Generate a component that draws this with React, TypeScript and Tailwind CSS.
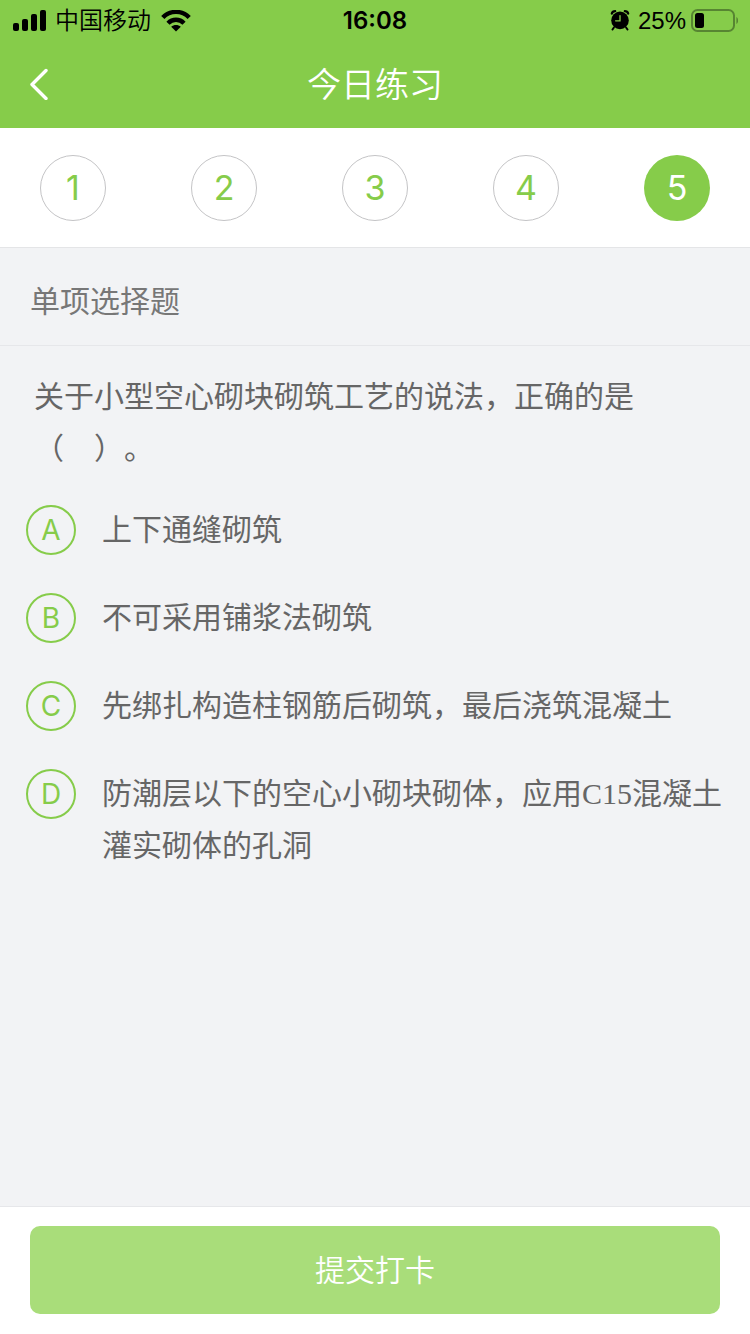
import { useState } from 'react'
import clsx from 'clsx'

const STEPS = [1, 2, 3, 4, 5]

const OPTIONS = [
  { key: 'A', text: '上下通缝砌筑' },
  { key: 'B', text: '不可采用铺浆法砌筑' },
  { key: 'C', text: '先绑扎构造柱钢筋后砌筑，最后浇筑混凝土' },
  { key: 'D', text: '防潮层以下的空心小砌块砌体，应用C15混凝土灌实砌体的孔洞' },
]

function SignalIcon() {
  return (
    <svg width="34" height="22" viewBox="0 0 34 22" aria-hidden="true">
      <rect x="1" y="13" width="6" height="8" rx="2" />
      <rect x="10" y="9" width="6" height="12" rx="2" />
      <rect x="19" y="4" width="6" height="17" rx="2" />
      <rect x="28" y="0" width="6" height="21" rx="2" />
    </svg>
  )
}

function WifiIcon() {
  return (
    <svg width="30" height="22" viewBox="0 0 30 22" fill="none" stroke="#000" strokeWidth="4.4" aria-hidden="true">
      <path d="M1.8 7.6C9 0 21 0 28.2 7.6" />
      <path d="M7 13.2C11.4 8.6 18.6 8.6 23 13.2" />
      <path d="M15 21.4l-4.8-4.6c2.6-2.4 7-2.4 9.6 0z" fill="#000" stroke="none" />
    </svg>
  )
}

function AlarmIcon() {
  return (
    <svg width="20" height="22" viewBox="0 0 20 22" fill="none" stroke="#000" strokeLinecap="round" aria-hidden="true">
      <circle cx="10" cy="10.4" r="8.8" fill="#000" stroke="none" />
      <path d="M1.8 3.6C2.2 2.2 3.6 1.2 5.2 1.2M18.2 3.6C17.8 2.2 16.4 1.2 14.8 1.2" strokeWidth="2.2" />
      <path d="M4 17.4l-1.6 2.2M16 17.4l1.6 2.2" strokeWidth="1.8" />
      <path d="M10 5.6v5.2H5.6" stroke="#86cc4a" strokeWidth="1.3" />
    </svg>
  )
}

function BatteryIcon() {
  return (
    <svg width="48" height="24" viewBox="0 0 48 24" aria-hidden="true">
      <rect x="2" y="1" width="42" height="21" rx="5.5" fill="none" stroke="#578532" strokeWidth="2" />
      <rect x="5" y="4" width="9" height="15" rx="2.5" />
      <path d="M46.4 8c2.2 1 2.2 6 0 7z" fill="#578532" />
    </svg>
  )
}

function StatusBar() {
  return (
    <div className="grid h-10 grid-cols-3 items-center px-3 pt-0.5 text-2xl text-black">
      <div className="flex items-center gap-2.5">
        <SignalIcon />
        <span className="-ml-px font-[350]">中国移动</span>
        <WifiIcon />
      </div>
      <div className="text-center font-semibold">16:08</div>
      <div className="flex items-center justify-end gap-1">
        <AlarmIcon />
        <span className="pl-1 font-['Liberation_Sans',sans-serif]">25%</span>
        <BatteryIcon />
      </div>
    </div>
  )
}

export default function App() {
  const [step, setStep] = useState(5)
  const [answer, setAnswer] = useState('')

  return (
    <div className="flex min-h-screen flex-col bg-[#f2f3f5] font-['Inter','Noto_Sans_CJK_SC',sans-serif]">
      <header className="bg-[#86cc4a]">
        <StatusBar />
        <div className="grid h-22 grid-cols-[1fr_auto_1fr] items-center">
          <button type="button" aria-label="返回" className="w-fit px-7 py-4">
            <svg width="22" height="32" viewBox="0 0 22 32" fill="none" stroke="#fff" strokeWidth="3.4" strokeLinecap="round" strokeLinejoin="round">
              <path d="M18 2.5L4 16.5L18 30.5" />
            </svg>
          </button>
          <h1 className="text-[34px] font-[350] text-white">今日练习</h1>
        </div>
      </header>

      {/* Question numbers */}
      <nav className="flex h-[120px] items-center justify-between border-b border-[#e4e5e7] bg-white px-10">
        {STEPS.map(n => (
          <button
            key={n}
            type="button"
            onClick={() => setStep(n)}
            className={clsx(
              'flex size-[66px] items-center justify-center rounded-full text-[34px]',
              n === step ? 'bg-[#86cc4a] text-white' : 'border border-[#c4c4c6] text-[#86cc4a]'
            )}
          >
            {n}
          </button>
        ))}
      </nav>

      <main className="flex-1">
        <h2 className="border-b border-[#e6e7ea] px-[30px] pt-[27px] pb-[18px] text-[30px] leading-[52px] font-normal text-[#777]">
          单项选择题
        </h2>

        <form className="text-[30px] leading-[52px] font-normal text-[#666]">
          <p className="px-[34px] pt-6 [text-spacing-trim:space-all]">关于小型空心砌块砌筑工艺的说法，正确的是（　）。</p>

          <div className="mt-[30px] flex flex-col gap-9 pr-6 pl-[26px]">
            {OPTIONS.map(o => (
              <label key={o.key} className="flex items-start gap-[26px]">
                <input
                  type="radio"
                  name="answer"
                  value={o.key}
                  checked={answer === o.key}
                  onChange={() => setAnswer(o.key)}
                  className="peer sr-only"
                />
                <span className="my-px flex size-[50px] shrink-0 items-center justify-center rounded-full border-2 border-[#86cc4a] text-[28px] font-normal text-[#86cc4a] peer-checked:bg-[#86cc4a] peer-checked:text-white">
                  {o.key}
                </span>
                <span className="font-['Liberation_Serif','Noto_Sans_CJK_SC',sans-serif]">{o.text}</span>
              </label>
            ))}
          </div>
        </form>
      </main>

      <footer className="border-t border-[#e6e7ea] bg-white px-[30px] pt-[19px] pb-5">
        <button type="button" className="h-22 w-full rounded-[10px] bg-[#a9dd7a] text-[30px] font-[350] text-white">
          提交打卡
        </button>
      </footer>
    </div>
  )
}
